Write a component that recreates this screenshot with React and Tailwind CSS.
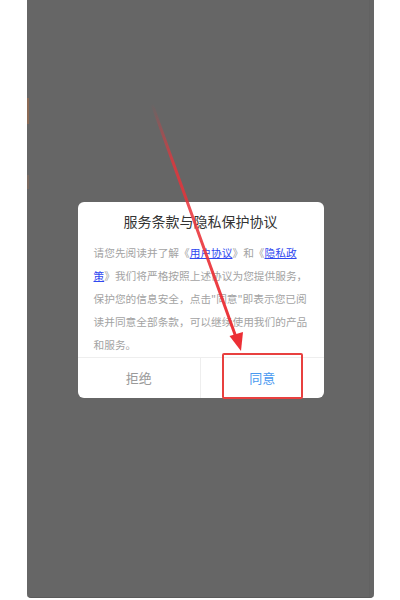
import React from "react";

export default function App() {
  const font = { fontFamily: '"Noto Sans CJK SC", "Noto Sans", sans-serif' };
  return (
    <div className="relative w-[400px] h-[600px] bg-white overflow-hidden" style={font}>
      <div className="relative ml-[27px] w-[347px] h-[598px] bg-[#666666] rounded-b-[4px] border-b border-[#5a5a5a] flex items-center justify-center pt-[3px]">
        <div className="absolute left-0 top-[98px] w-[2px] h-[26px] bg-[#8a6a55]" />
        <div className="absolute left-0 top-[175px] w-[2px] h-[14px] bg-[#7a6a60]" />
        <div className="absolute right-[4px] top-0 w-px h-full bg-[#626262]" />
        <div className="w-[246px] bg-white rounded-[6px] flex flex-col">
          <div className="pt-[9px] text-center text-[14px] leading-[20px] text-[#333333]">
            服务条款与隐私保护协议
          </div>
          <div className="mt-[10px] px-[16px] text-[10.7px] leading-[23px] text-[#a3a3a3]">
            <div className="whitespace-nowrap">
              请您先阅读并了解《<span className="text-[#3048f0] underline">用户协议</span>》和《<span className="text-[#3048f0] underline">隐私政</span>
            </div>
            <div className="whitespace-nowrap">
              <span className="text-[#3048f0] underline">策</span>》我们将严格按照上述协议为您提供服务，
            </div>
            <div className="whitespace-nowrap">保护您的信息安全，点击"同意"即表示您已阅</div>
            <div className="whitespace-nowrap">读并同意全部条款，可以继续使用我们的产品</div>
            <div className="whitespace-nowrap">和服务。</div>
          </div>
          <div className="mt-[1px] border-t border-[#eeeeee] flex h-[41px]">
            <div className="flex-1 flex items-center justify-center text-[13px] text-[#9a9a9a] border-r border-[#eeeeee]">
              拒绝
            </div>
            <div className="flex-1 flex items-center justify-center text-[13px] text-[#4a9af0]">
              同意
            </div>
          </div>
        </div>
      </div>
      <div className="absolute left-[222px] top-[353px] w-[81px] h-[46px] border-2 border-[#e8403f] rounded-[2px] pointer-events-none" />
      <svg className="absolute inset-0 pointer-events-none" width="400" height="600" viewBox="0 0 400 600">
        <defs>
          <linearGradient id="ag" x1="152" y1="104" x2="238" y2="345" gradientUnits="userSpaceOnUse">
            <stop offset="0" stopColor="#e8333a" stopOpacity="0" />
            <stop offset="0.25" stopColor="#e8333a" stopOpacity="0.8" />
            <stop offset="1" stopColor="#ec2f35" stopOpacity="1" />
          </linearGradient>
        </defs>
        <line x1="152" y1="104" x2="237" y2="340" stroke="url(#ag)" strokeWidth="3" strokeLinecap="round" />
        <polygon points="241,351 229.5,336 243,332" fill="#ec2f35" />
      </svg>
    </div>
  );
}
